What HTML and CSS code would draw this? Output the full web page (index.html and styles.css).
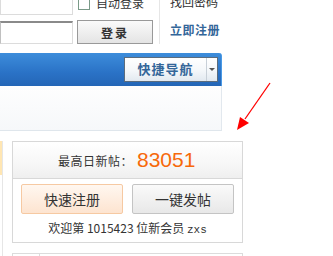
FILE: index.html
```html
<!DOCTYPE html>
<html>
<head>
<meta charset="utf-8">
<link rel="stylesheet" href="styles.css">
</head>
<body>
<div class="top">
  <div class="col-inputs">
    <div class="inp inp-a"></div>
    <div class="inp inp-b"></div>
  </div>
  <div class="col-login">
    <label class="auto"><span class="chk"></span><span>自动登录</span></label>
    <button class="btn-login">登录</button>
  </div>
  <div class="divider"></div>
  <div class="col-links">
    <span class="find">找回密码</span>
    <a class="reg">立即注册</a>
  </div>
</div>

<div class="nav">
  <div class="qnav">
    <span class="qnav-label">快捷导航</span>
    <span class="qnav-drop"><span class="tri"></span></span>
  </div>
</div>
<div class="subpanel"></div>

<svg class="arrow" width="60" height="60" viewBox="0 0 60 60">
  <line x1="40" y1="2" x2="15" y2="38" stroke="#ff0000" stroke-width="1.3"/>
  <polygon points="7,49 10,36 19,42" fill="#ff0000"/>
</svg>

<div class="stats-row">
  <div class="sidestrip"></div>
  <div class="statbox">
    <div class="stathead">
      <span class="statlabel">最高日新帖：</span><span class="statnum">83051</span>
    </div>
    <div class="btns">
      <button class="btn btn-reg">快速注册</button>
      <button class="btn btn-post">一键发帖</button>
    </div>
    <div class="welcome">欢迎第 1015423 位新会员 <span class="mono">zxs</span></div>
  </div>
</div>
<div class="nextrow">
  <div class="nextbox"><span class="tab"></span></div>
</div>
</body>
</html>
```

FILE: styles.css
```css
html, body {
  margin: 0;
  padding: 0;
  background: #fff;
  width: 333px;
  height: 256px;
  overflow: hidden;
  font-family: "Noto Sans CJK SC", "Liberation Sans", sans-serif;
  color: #333;
}

.top {
  display: flex;
  margin-top: -10px;
  height: 63px;
}

.col-inputs {
  width: 73px;
  display: flex;
  flex-direction: column;
  gap: 6px;
}

.inp {
  box-sizing: border-box;
  border: 1px solid #dcdcdc;
  background: #fff;
}

.inp-a { height: 25px; }

.inp-b {
  height: 23px;
  border-top: 2px solid #8a8a8a;
  border-left: 1px solid #c0c0c0;
}

.col-login {
  margin-left: 4px;
  width: 76px;
  display: flex;
  flex-direction: column;
  gap: 7px;
}

.auto {
  height: 23px;
  display: flex;
  align-items: flex-end;
  gap: 6px;
  font-size: 12px;
  line-height: 14px;
  color: #333;
  padding-bottom: 3px;
  box-sizing: border-box;
}

.chk {
  display: block;
  width: 10px;
  height: 12px;
  border: 1px solid #7a9a88;
  background: #fff;
  margin-left: 1px;
  margin-bottom: 0;
}

.btn-login {
  height: 24px;
  width: 76px;
  padding: 0;
  border: 1px solid #999;
  background: linear-gradient(#fafafa, #e4e4e4);
  font-family: inherit;
  font-size: 12px;
  font-weight: bold;
  color: #333;
  letter-spacing: 2px;
}

.divider {
  width: 1px;
  height: 54px;
  background: #e6e6e6;
  margin-left: 6px;
}

.col-links {
  margin-left: 10px;
  display: flex;
  flex-direction: column;
  gap: 14px;
  padding-top: 5px;
  font-size: 12px;
  line-height: 14px;
}

.find { color: #333; }

.reg {
  color: #336699;
  font-weight: bold;
  letter-spacing: 0.5px;
}

.nav {
  width: 222px;
  height: 33px;
  box-sizing: border-box;
  background: linear-gradient(#3d8ddb, #2a72c6 60%, #2466b6);
  border-top-right-radius: 3px;
  border-right: 1px solid #4a9ae6;
  display: flex;
  justify-content: flex-end;
  padding: 4px 3px 0 0;
}

.qnav {
  display: flex;
  height: 25px;
  box-sizing: border-box;
  border: 1px solid #5b6c7d;
  background: linear-gradient(#ffffff, #f4f7fa 55%, #e2e9f0);
}

.qnav-label {
  width: 81px;
  text-align: center;
  font-size: 13px;
  line-height: 22px;
  font-weight: bold;
  color: #336699;
  letter-spacing: 1px;
  border-right: 1px solid #c8d0d8;
}

.qnav-drop {
  width: 10px;
  display: flex;
  align-items: center;
  justify-content: center;
}

.tri {
  width: 0;
  height: 0;
  border-left: 3px solid transparent;
  border-right: 3px solid transparent;
  border-top: 3px solid #555;
}

.subpanel {
  width: 222px;
  height: 45px;
  box-sizing: border-box;
  background: linear-gradient(#fefefe, #f6f8fa);
  border-right: 1px solid #e2e8ee;
  border-bottom: 1px solid #dfe6ec;
}

.arrow {
  position: absolute;
  left: 230px;
  top: 81px;
}

.stats-row {
  margin-top: 10px;
  display: flex;
}

.sidestrip {
  width: 2px;
  height: 34px;
  background: #ffe6b3;
  border-right: 1px solid #e6e6e6;
  align-self: flex-start;
}

.stats-row, .nextrow {
  position: relative;
}

.stats-row::before {
  content: "";
  position: absolute;
  left: 2px;
  top: 0;
  bottom: -10px;
  width: 1px;
  background: #e6e6e6;
}

.nextrow::before {
  content: "";
  position: absolute;
  left: 2px;
  top: 0;
  bottom: 0;
  width: 1px;
  background: #e6e6e6;
}

.statbox {
  margin-left: 9px;
  width: 231px;
  height: 102px;
  box-sizing: border-box;
  border: 1px solid #d8d8d8;
}

.stathead {
  height: 37px;
  box-sizing: border-box;
  border-bottom: 1px solid #d8d8d8;
  background: linear-gradient(#ffffff, #f7f7f7 60%, #efefef);
  display: flex;
  align-items: center;
  padding-left: 45px;
}

.statlabel {
  font-size: 12px;
  color: #333;
  letter-spacing: 0.5px;
}

.statnum {
  margin-left: 4px;
  font-family: "Liberation Sans", Arial, sans-serif;
  font-size: 21px;
  color: #f7690a;
}

.btns {
  display: flex;
  gap: 9px;
  padding: 5px 0 0 8px;
}

.btn {
  width: 102px;
  height: 30px;
  padding: 0;
  box-sizing: border-box;
  font-family: inherit;
  font-size: 14px;
  color: #333;
  border-radius: 2px;
}

.btn-reg {
  border: 1px solid #f6c9a2;
  background: linear-gradient(#fff7f0, #fde4d0);
}

.btn-post {
  border: 1px solid #c4c4c4;
  background: linear-gradient(#fafafa, #e8e8e8);
}

.welcome {
  text-align: center;
  font-size: 12px;
  line-height: 14px;
  margin-top: 7px;
  color: #333;
}

.mono {
  font-family: "Liberation Mono", monospace;
  font-size: 11px;
}

.nextrow {
  margin-top: 10px;
  display: flex;
  height: 4px;
}

.nextbox {
  margin-left: 12px;
  width: 231px;
  height: 4px;
  box-sizing: border-box;
  border: 1px solid #dcdcdc;
  border-bottom: none;
  position: relative;
}

.tab {
  position: absolute;
  left: 0;
  top: 0;
  width: 26px;
  height: 4px;
  border-right: 1px solid #dcdcdc;
}
```
